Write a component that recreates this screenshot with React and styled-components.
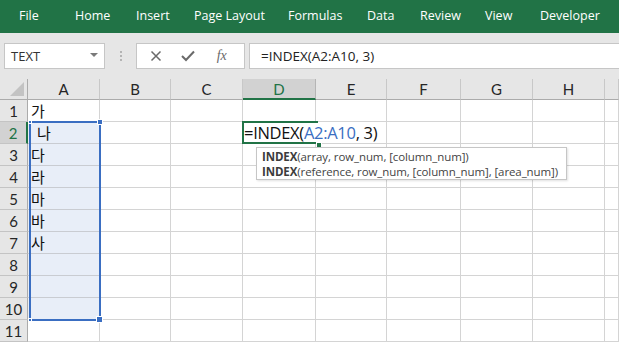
import React from 'react'
import styled, { createGlobalStyle } from 'styled-components'

const Global = createGlobalStyle`
  html, body {
    margin: 0;
    padding: 0;
    background: #fff;
    overflow: hidden;
  }
  * { box-sizing: border-box; }
`

const Page = styled.div`
  width: 619px;
  height: 342px;
  overflow: hidden;
  font-family: "Open Sans", "Noto Sans", sans-serif;
`

const Ribbon = styled.div`
  height: 33px;
  background: #217346;
  display: flex;
  align-items: center;
  padding-left: 19px;
`

const Tab = styled.div`
  width: ${p => p.w}px;
  flex: none;
  color: #fff;
  font-size: 12.5px;
  white-space: nowrap;
  padding-bottom: 3px;
`

const FormulaArea = styled.div`
  height: 46px;
  background: #e6e6e6;
  display: flex;
  align-items: flex-start;
  padding: 10px 0 0 4px;
`

const NameBox = styled.div`
  width: 101px;
  height: 26px;
  background: #fff;
  border: 1px solid #c6c6c6;
  display: flex;
  align-items: center;
  justify-content: space-between;
  padding: 0 6px 0 6px;
  font-size: 13px;
  color: #333;
`

const Caret = styled.span`
  width: 0;
  height: 0;
  border-left: 4px solid transparent;
  border-right: 4px solid transparent;
  border-top: 4px solid #7a7a7a;
  margin-top: -3px;
`

const Grip = styled.div`
  width: 31px;
  height: 26px;
  display: flex;
  flex-direction: column;
  align-items: center;
  justify-content: center;
  gap: 2px;
  span {
    width: 2px;
    height: 2px;
    background: #b4b4b4;
  }
`

const IconBox = styled.div`
  width: 109px;
  height: 26px;
  background: #fff;
  border: 1px solid #c6c6c6;
  display: flex;
  align-items: center;
  padding-left: 13px;
`

const IconSlot = styled.div`
  width: 35px;
  display: flex;
  align-items: center;
  color: #6a6a6a;
`

const Fx = styled.span`
  font-family: "Liberation Serif", serif;
  font-style: italic;
  font-size: 14px;
  color: #6a6a6a;
  margin-left: 4px;
`

const FormulaInput = styled.div`
  flex: 1;
  height: 26px;
  margin-left: 4px;
  margin-right: -2px;
  background: #fff;
  border: 1px solid #c6c6c6;
  display: flex;
  align-items: center;
  padding-left: 11px;
  font-size: 13.5px;
  color: #222;
`

const Sheet = styled.div`
  position: relative;
  display: grid;
  grid-template-columns: 28px 72px 71px 72px 73px 71px 74px 72px 72px 1fr;
  grid-template-rows: 21px repeat(11, 22px);
  font-family: Lato, "Open Sans", sans-serif;
`

const ColHead = styled.div`
  grid-row: 1;
  grid-column: ${p => p.c};
  background: ${p => (p.active ? '#d2d2d2' : '#e6e6e6')};
  border-right: 1px solid ${p => (p.active ? '#b5b5b5' : '#c8c8c8')};
  border-bottom: ${p => (p.active ? '2px solid #217346' : '1px solid #ababab')};
  color: ${p => (p.active ? '#217346' : '#262626')};
  font-size: 15px;
  display: flex;
  align-items: center;
  justify-content: center;
  padding-top: ${p => (p.active ? '1px' : '0')};
`

const Corner = styled.div`
  grid-row: 1;
  grid-column: 1;
  background: #e6e6e6;
  border-right: 1px solid #ababab;
  border-bottom: 1px solid #ababab;
  position: relative;
  &::after {
    content: '';
    position: absolute;
    right: 3px;
    bottom: 3px;
    width: 0;
    height: 0;
    border-left: 14px solid transparent;
    border-bottom: 14px solid #c3c3c3;
  }
`

const RowHead = styled.div`
  grid-column: 1;
  grid-row: ${p => p.r};
  background: ${p => (p.active ? '#d2d2d2' : '#e6e6e6')};
  border-right: ${p => (p.active ? '2px solid #217346' : '1px solid #ababab')};
  border-bottom: 1px solid #c4c4c4;
  color: ${p => (p.active ? '#217346' : '#262626')};
  font-size: 15px;
  display: flex;
  align-items: center;
  justify-content: center;
  padding-top: 1px;
`

const Cell = styled.div`
  grid-row: ${p => p.r};
  grid-column: ${p => p.c};
  background: ${p => (p.sel ? '#e8eef8' : '#fff')};
  border-right: 1px solid #d4d4d4;
  border-bottom: 1px solid ${p => (p.sel ? '#c9ccd2' : '#d4d4d4')};
  font-family: "Noto Sans CJK KR", sans-serif;
  font-size: 15px;
  color: #111;
  display: flex;
  align-items: flex-end;
  padding: 0 0 0 ${p => (p.indent ? 9 : 3)}px;
  line-height: 21px;
  white-space: nowrap;
`

const Range = styled.div`
  grid-column: 2;
  grid-row: 3 / 12;
  margin: -1px -1px -1px 1px;
  border: 2px solid #3a6ec2;
  position: relative;
  pointer-events: none;
`

const Handle = styled.span`
  position: absolute;
  z-index: 3;
  width: ${p => p.s}px;
  height: ${p => p.s}px;
  background: ${p => p.c || '#3a6ec2'};
  ${p => (p.top ? 'top' : 'bottom')}: -${p => p.o}px;
  ${p => (p.left ? 'left' : 'right')}: -${p => p.o}px;
  border: 1px solid #fff;
`

const ActiveCell = styled.div`
  grid-column: 5;
  grid-row: 3;
  margin: -1px -2px 0 -1px;
  position: relative;
  z-index: 1;
  &::after {
    content: '';
    position: absolute;
    inset: 0;
    border: 2px solid #217346;
    border-right: none;
    z-index: 2;
  }
`

const EditText = styled.div`
  position: absolute;
  left: 2px;
  top: 2px;
  height: 19px;
  padding: 0 6px 0 0;
  background: #fff;
  font-family: "Open Sans", sans-serif;
  font-size: 16.5px;
  letter-spacing: -0.3px;
  line-height: 19px;
  color: #111;
  white-space: nowrap;
  z-index: 1;
`

const Ref = styled.span`
  color: #3a6ec2;
`

const Tooltip = styled.div`
  position: absolute;
  left: 256px;
  top: 68px;
  width: 311px;
  height: 33px;
  background: #fff;
  border: 1px solid #c6c6c6;
  box-shadow: 1px 1px 2px rgba(0, 0, 0, 0.12);
  padding: 1px 0 0 5px;
  font-family: "Open Sans", sans-serif;
  font-size: 11.5px;
  line-height: 15px;
  color: #444;
  z-index: 2;
  letter-spacing: -0.1px;
  b {
    font-weight: 700;
    color: #3c3c3c;
  }
`

const tabs = [
  ['File', 56],
  ['Home', 61],
  ['Insert', 58],
  ['Page Layout', 94],
  ['Formulas', 79],
  ['Data', 53],
  ['Review', 65],
  ['View', 55],
  ['Developer', 60],
]

const cols = ['A', 'B', 'C', 'D', 'E', 'F', 'G', 'H', '']
const values = ['가', '나', '다', '라', '마', '바', '사', '', '', '', '']

const XIcon = () => (
  <svg width="12" height="12" viewBox="0 0 12 12">
    <path d="M1.5 1.5 L10.5 10.5 M10.5 1.5 L1.5 10.5" stroke="currentColor" strokeWidth="1.5" />
  </svg>
)

const CheckIcon = () => (
  <svg width="14" height="12" viewBox="0 0 14 12">
    <path d="M1 6 L5 10 L13 1.5" stroke="currentColor" strokeWidth="2" fill="none" />
  </svg>
)

export default function App() {
  return (
    <Page>
      <Global />
      <Ribbon>
        {tabs.map(([t, w]) => (
          <Tab key={t} w={w}>{t}</Tab>
        ))}
      </Ribbon>
      <FormulaArea>
        <NameBox>
          TEXT
          <Caret />
        </NameBox>
        <Grip>
          <span />
          <span />
          <span />
        </Grip>
        <IconBox>
          <IconSlot><XIcon /></IconSlot>
          <IconSlot><CheckIcon /></IconSlot>
          <IconSlot><Fx>fx</Fx></IconSlot>
        </IconBox>
        <FormulaInput>=INDEX(A2:A10, 3)</FormulaInput>
      </FormulaArea>
      <Sheet>
        <Corner />
        {cols.map((c, i) => (
          <ColHead key={i} c={i + 2} active={c === 'D'}>{c}</ColHead>
        ))}
        {values.map((v, r) => (
          <React.Fragment key={r}>
            <RowHead r={r + 2} active={r === 1}>{r + 1}</RowHead>
            {cols.map((c, i) => (
              <Cell
                key={i}
                r={r + 2}
                c={i + 2}
                sel={i === 0 && r >= 1 && r <= 9}
                indent={i === 0 && r === 1}
              >
                {i === 0 ? v : ''}
              </Cell>
            ))}
          </React.Fragment>
        ))}
        <Range>
          <Handle s={4} o={3} top left />
          <Handle s={6} o={4} top />
          <Handle s={4} o={3} left />
          <Handle s={7} o={4} />
        </Range>
        <ActiveCell>
          <EditText>
            =INDEX(<Ref>A2:A10</Ref>, 3)
          </EditText>
          <Handle s={6} o={4} c="#217346" />
        </ActiveCell>
        <Tooltip>
          <div><b>INDEX</b>(array, row_num, [column_num])</div>
          <div><b>INDEX</b>(reference, row_num, [column_num], [area_num])</div>
        </Tooltip>
      </Sheet>
    </Page>
  )
}
